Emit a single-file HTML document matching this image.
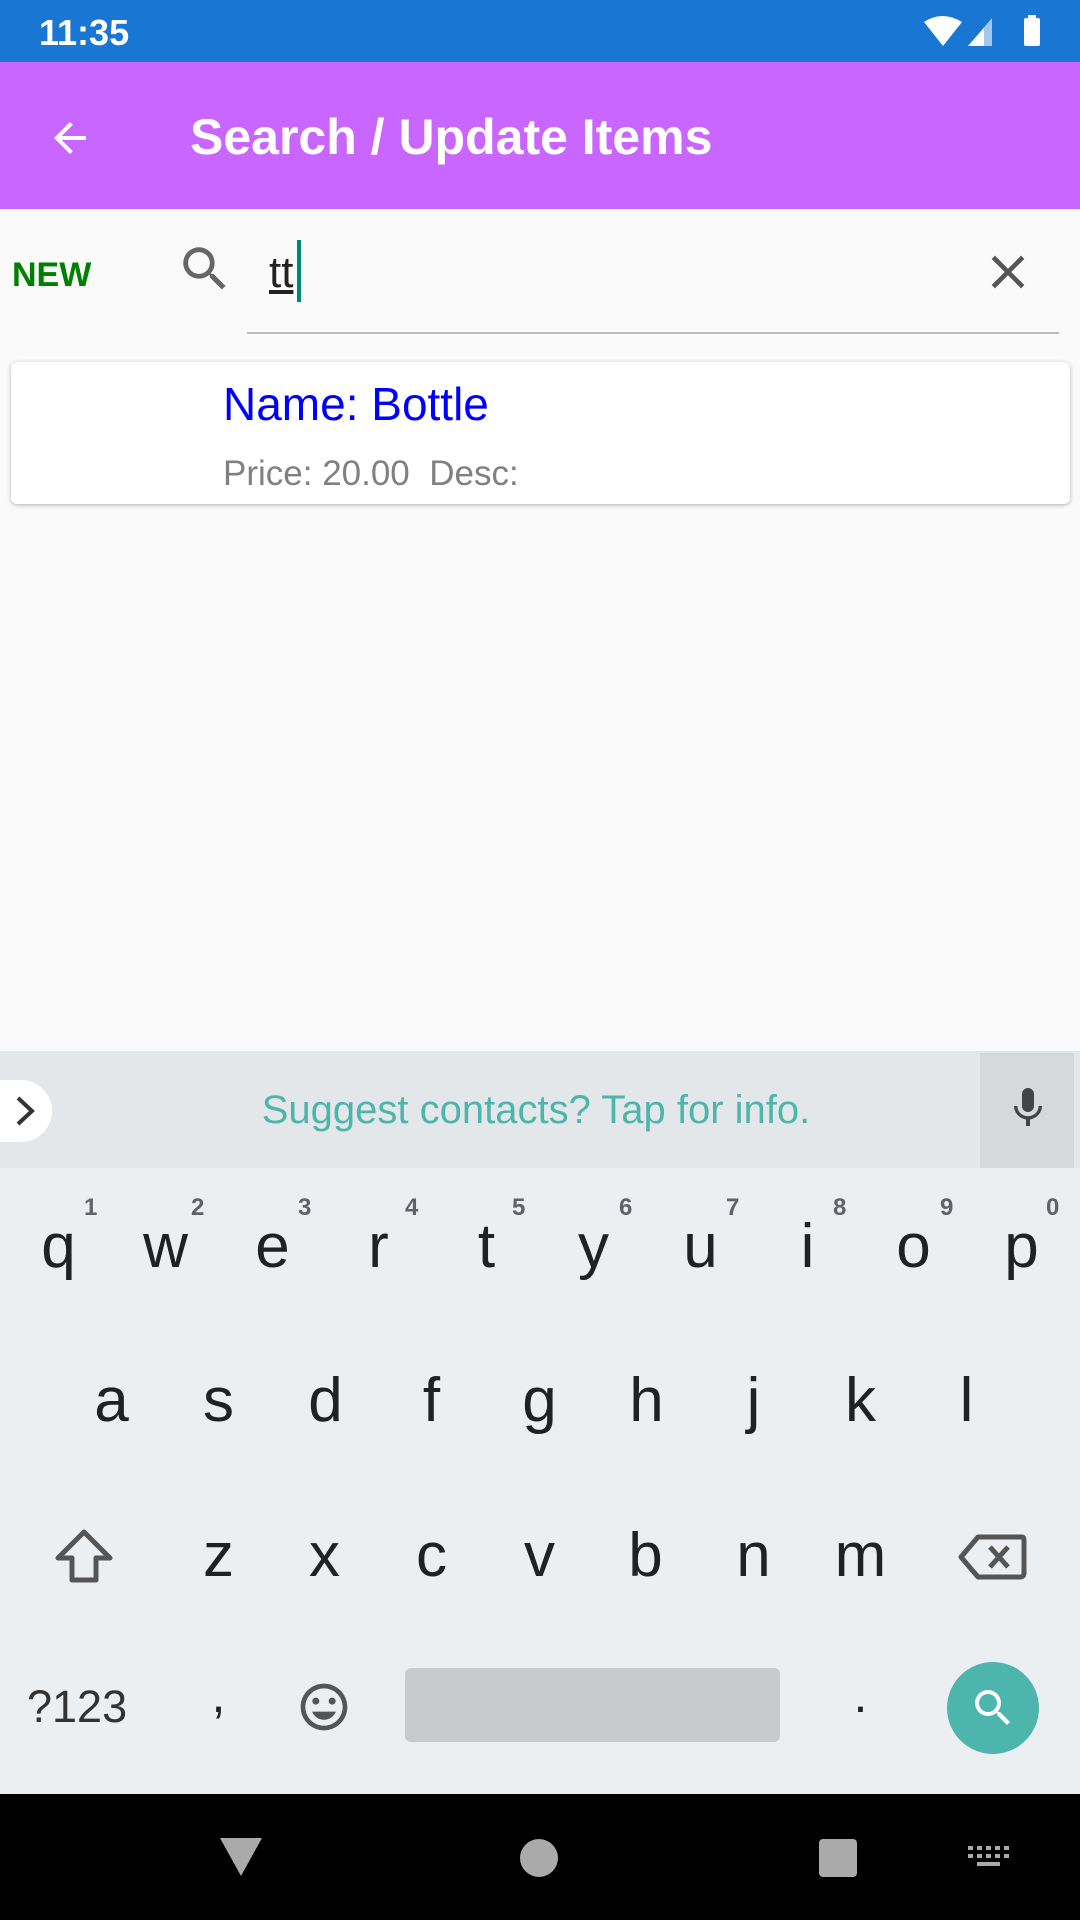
<!DOCTYPE html>
<html><head><meta charset="utf-8"><style>
*{margin:0;padding:0;box-sizing:border-box}
body{width:1080px;height:1920px;background:#fafafa;font-family:"Liberation Sans",Roboto,sans-serif;position:relative;overflow:hidden}
.a{position:absolute}
.k{position:absolute;width:107px;text-align:center;font-size:62px;color:#202124;line-height:1}
.n{position:absolute;font-size:24px;color:#5f6368;font-weight:bold}
</style></head><body>
<div class="a" style="left:0;top:0;width:1080px;height:62px;background:#1976d2"></div>
<div class="a" style="left:39px;top:12px;color:#fff;font-size:36px;font-weight:bold">11:35</div>
<svg class="a" style="left:922px;top:14px" width="122" height="34" viewBox="0 0 122 34">
<path d="M2 8 Q20 -4 40 8 L21 32 Z" fill="#fff"/>
<path d="M70 4 L70 32 L46 32 Z" fill="#fff" opacity=".6"/><path d="M62 14 L62 32 L46 32 Z" fill="#fff"/>
<rect x="102" y="4" width="16" height="28" rx="2" fill="#fff"/><rect x="106" y="1" width="8" height="4" fill="#fff"/>
</svg>
<div class="a" style="left:0;top:62px;width:1080px;height:147px;background:#c966ff"></div>
<svg class="a" style="left:46px;top:114px" width="48" height="48" viewBox="0 0 24 24"><path d="M20 11H7.830l5.59-5.59L12 4l-8 8 8 8 1.41-1.41L7.83 13H20v-2z" fill="#fff"/></svg>
<div class="a" style="left:190px;top:108px;color:#fff;font-size:50px;font-weight:bold">Search / Update Items</div>
<div class="a" style="left:12px;top:256px;color:#008000;font-size:34px;font-weight:bold">NEW</div>
<svg class="a" style="left:176px;top:240px" width="58" height="58" viewBox="0 0 24 24"><path d="M15.5 14h-.79l-.28-.27A6.470 6.470 0 0016 9.5 6.5 6.5 0 109.5 16c1.61 0 3.09-.59 4.23-1.57l.27.28v.79l5 4.99L20.49 19l-4.99-5zm-6 0C7.01 14 5 11.99 5 9.5S7.01 5 9.5 5 14 7.01 14 9.5 11.99 14 9.5 14z" fill="#666"/></svg>
<div class="a" style="left:269px;top:248px;font-size:44px;color:#222;text-decoration:underline">tt</div>
<div class="a" style="left:297px;top:240px;width:4px;height:62px;background:#008577"></div>
<svg class="a" style="left:980px;top:244px" width="56" height="56" viewBox="0 0 24 24"><path d="M19 6.41L17.59 5 12 10.59 6.41 5 5 6.41 10.59 12 5 17.59 6.41 19 12 13.41 17.59 19 19 17.59 13.41 12z" fill="#555"/></svg>
<div class="a" style="left:247px;top:332px;width:812px;height:2px;background:#bbb"></div>
<div class="a" style="left:11px;top:362px;width:1059px;height:142px;background:#fff;border-radius:6px;box-shadow:0 1px 4px rgba(0,0,0,.3)"></div>
<div class="a" style="left:223px;top:377px;font-size:46px;color:#0000ff">Name: Bottle</div>
<div class="a" style="left:223px;top:454px;font-size:35px;color:#808080">Price: 20.00&nbsp; Desc:</div>
<div class="a" style="left:0;top:1051px;width:1080px;height:117px;background:#e4e7ea"></div>
<div class="a" style="left:-30px;top:1080px;width:82px;height:62px;border-radius:31px;background:#fff"></div>
<svg class="a" style="left:12px;top:1094px" width="28" height="34" viewBox="0 0 28 34"><path d="M6 4 L20 17 L6 30" stroke="#333" stroke-width="4" fill="none"/></svg>
<div class="a" style="left:0;top:1088px;width:1072px;text-align:center;font-size:40px;color:#4db6ac">Suggest contacts? Tap for info.</div>
<div class="a" style="left:980px;top:1053px;width:94px;height:115px;background:#d6d9dc"></div>
<svg class="a" style="left:1004px;top:1084px" width="48" height="48" viewBox="0 0 24 24"><path d="M12 14c1.66 0 2.99-1.34 2.99-3L15 5c0-1.66-1.34-3-3-3S9 3.34 9 5v6c0 1.66 1.34 3 3 3zm5.3-3c0 3-2.54 5.1-5.3 5.1S6.7 14 6.7 11H5c0 3.41 2.72 6.23 6 6.72V21h2v-3.28c3.28-.48 6-3.3 6-6.72h-1.7z" fill="#444"/></svg>
<div class="a" style="left:0;top:1168px;width:1080px;height:626px;background:#eceff1"></div>
<div class="k" style="left:5px;top:1216px">q</div><div class="k" style="left:112px;top:1216px">w</div><div class="k" style="left:219px;top:1216px">e</div><div class="k" style="left:325px;top:1216px">r</div><div class="k" style="left:433px;top:1216px">t</div><div class="k" style="left:540px;top:1216px">y</div><div class="k" style="left:647px;top:1216px">u</div><div class="k" style="left:754px;top:1216px">i</div><div class="k" style="left:860px;top:1216px">o</div><div class="k" style="left:968px;top:1216px">p</div>
<div class="n" style="left:84px;top:1194px">1</div><div class="n" style="left:191px;top:1194px">2</div><div class="n" style="left:298px;top:1194px">3</div><div class="n" style="left:405px;top:1194px">4</div><div class="n" style="left:512px;top:1194px">5</div><div class="n" style="left:619px;top:1194px">6</div><div class="n" style="left:726px;top:1194px">7</div><div class="n" style="left:833px;top:1194px">8</div><div class="n" style="left:940px;top:1194px">9</div><div class="n" style="left:1046px;top:1194px">0</div>
<div class="k" style="left:58px;top:1370px">a</div><div class="k" style="left:165px;top:1370px">s</div><div class="k" style="left:272px;top:1370px">d</div><div class="k" style="left:378px;top:1370px">f</div><div class="k" style="left:486px;top:1370px">g</div><div class="k" style="left:593px;top:1370px">h</div><div class="k" style="left:700px;top:1370px">j</div><div class="k" style="left:807px;top:1370px">k</div><div class="k" style="left:913px;top:1370px">l</div>
<svg class="a" style="left:54px;top:1528px" width="60" height="56" viewBox="0 0 60 56"><path d="M30 4 L56 30 L42 30 L42 52 L18 52 L18 30 L4 30 Z" stroke="#555" stroke-width="5" fill="none" stroke-linejoin="round"/></svg>
<div class="k" style="left:165px;top:1525px">z</div><div class="k" style="left:271px;top:1525px">x</div><div class="k" style="left:378px;top:1525px">c</div><div class="k" style="left:486px;top:1525px">v</div><div class="k" style="left:592px;top:1525px">b</div><div class="k" style="left:700px;top:1525px">n</div><div class="k" style="left:807px;top:1525px">m</div>
<svg class="a" style="left:958px;top:1533px" width="70" height="48" viewBox="0 0 70 48"><path d="M20 4 L64 4 Q66 4 66 8 L66 40 Q66 44 62 44 L20 44 L3 24 Z" stroke="#555" stroke-width="5" fill="none" stroke-linejoin="round"/><path d="M32 14 L50 34 M50 14 L32 34" stroke="#555" stroke-width="5"/></svg>
<div class="a" style="left:27px;top:1681px;font-size:45px;color:#333">?123</div>
<div class="k" style="left:165px;top:1670px;font-size:50px">,</div>
<svg class="a" style="left:296px;top:1679px" width="56" height="56" viewBox="0 0 24 24"><path d="M11.99 2C6.47 2 2 6.48 2 12s4.47 10 9.99 10C17.52 22 22 17.52 22 12S17.52 2 11.99 2zM12 20c-4.42 0-8-3.58-8-8s3.58-8 8-8 8 3.58 8 8-3.58 8-8 8zm3.5-9c.83 0 1.5-.67 1.5-1.5S16.33 8 15.5 8 14 8.67 14 9.5s.67 1.5 1.5 1.5zm-7 0c.83 0 1.5-.67 1.5-1.5S9.33 8 8.5 8 7 8.67 7 9.5 7.67 11 8.5 11zm3.5 6.5c2.33 0 4.31-1.46 5.110-3.5H6.89c.8 2.04 2.78 3.5 5.11 3.5z" fill="#555"/></svg>
<div class="a" style="left:405px;top:1668px;width:375px;height:74px;background:#c8cbce;border-radius:6px"></div>
<div class="k" style="left:807px;top:1670px;font-size:50px">.</div>
<div class="a" style="left:947px;top:1662px;width:92px;height:92px;border-radius:50%;background:#4db6ac"></div>
<svg class="a" style="left:969px;top:1684px" width="48" height="48" viewBox="0 0 24 24"><path d="M15.5 14h-.79l-.28-.27A6.47 6.47 0 0016 9.5 6.5 6.5 0 109.5 16c1.61 0 3.09-.59 4.23-1.57l.27.28v.79l5 4.99L20.49 19l-4.99-5zm-6 0C7.01 14 5 11.99 5 9.5S7.01 5 9.5 5 14 7.01 14 9.5 11.99 14 9.5 14z" fill="#fff"/></svg>
<div class="a" style="left:0;top:1794px;width:1080px;height:126px;background:#000"></div>
<svg class="a" style="left:218px;top:1836px" width="46" height="42" viewBox="0 0 46 42"><path d="M2 2 L44 2 L23 40 Z" fill="#aaa"/></svg>
<div class="a" style="left:520px;top:1839px;width:38px;height:38px;border-radius:50%;background:#aaa"></div>
<div class="a" style="left:819px;top:1839px;width:38px;height:38px;border-radius:4px;background:#aaa"></div>
<svg class="a" style="left:968px;top:1846px" width="42" height="24" viewBox="0 0 42 24"><g fill="#aaa"><rect x="0" y="0" width="5" height="4"/><rect x="9" y="0" width="5" height="4"/><rect x="18" y="0" width="5" height="4"/><rect x="27" y="0" width="5" height="4"/><rect x="36" y="0" width="5" height="4"/><rect x="0" y="8" width="5" height="4"/><rect x="9" y="8" width="5" height="4"/><rect x="18" y="8" width="5" height="4"/><rect x="27" y="8" width="5" height="4"/><rect x="36" y="8" width="5" height="4"/><rect x="9" y="16" width="23" height="4"/></g></svg>
</body></html>
